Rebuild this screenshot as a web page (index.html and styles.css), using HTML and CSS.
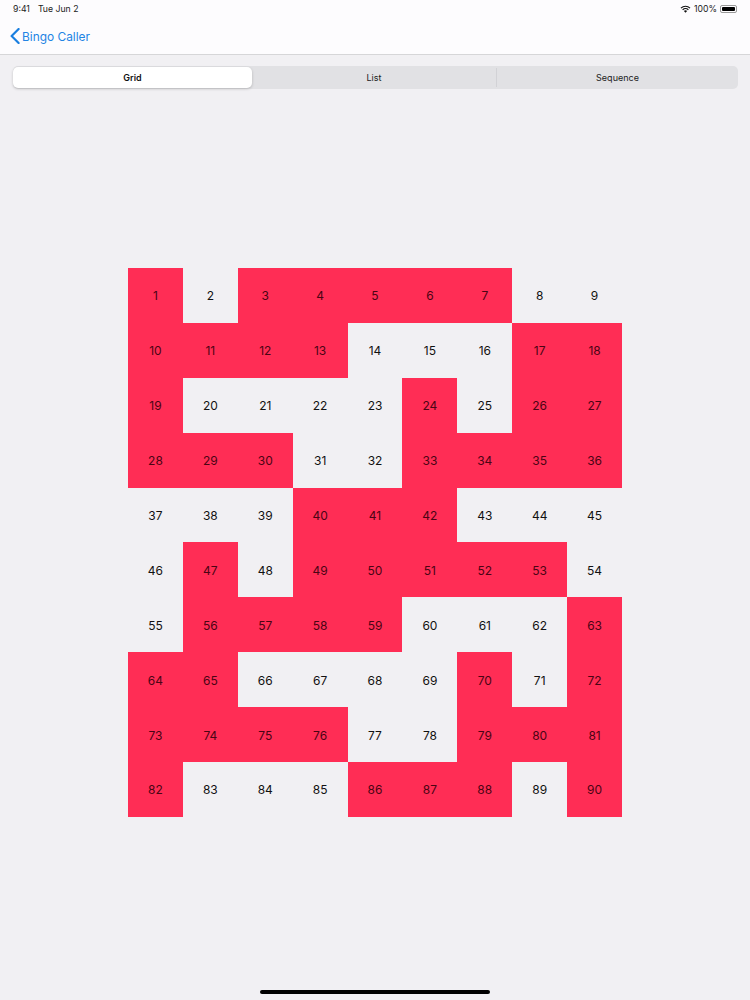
FILE: index.html
```html
<!DOCTYPE html>
<html lang="en">
<head>
  <meta charset="UTF-8">
  <meta name="viewport" content="width=device-width, initial-scale=1.0">
  <title>Bingo Caller</title>
  <link rel="stylesheet" href="styles.css">
</head>
<body>
  <header class="top-bar">
    <div class="status-bar">
      <div class="status-left">
        <span>9:41</span>
        <span>Tue Jun 2</span>
      </div>
      <div class="status-right">
        <svg class="wifi-icon" viewBox="0 0 16 12" width="11" height="8">
          <path d="M8 11.6 5.6 9.1a3.4 3.4 0 0 1 4.8 0z" fill="#111"/>
          <path d="M3.7 7.2a6.1 6.1 0 0 1 8.6 0" fill="none" stroke="#111" stroke-width="1.7"/>
          <path d="M1.2 4.6a9.7 9.7 0 0 1 13.6 0" fill="none" stroke="#111" stroke-width="1.7"/>
        </svg>
        <span>100%</span>
        <span class="battery"><span class="battery-fill"></span></span>
      </div>
    </div>
    <nav class="nav-bar">
      <a class="back-link" href="#">
        <svg viewBox="0 0 10 16" width="10" height="16">
          <path d="M8.6 1 1.6 8l7 7" fill="none" stroke="#1a7fe0" stroke-width="2.2" stroke-linecap="round" stroke-linejoin="round"/>
        </svg>
        <span>Bingo Caller</span>
      </a>
    </nav>
  </header>

  <main class="content">
    <div class="segments">
      <div class="segment active">Grid</div>
      <div class="segment list-segment">List</div>
      <div class="segment">Sequence</div>
    </div>

    <div class="board">
      <div class="cell on">1</div><div class="cell">2</div><div class="cell on">3</div><div class="cell on">4</div><div class="cell on">5</div><div class="cell on">6</div><div class="cell on">7</div><div class="cell">8</div><div class="cell">9</div>
      <div class="cell on">10</div><div class="cell on">11</div><div class="cell on">12</div><div class="cell on">13</div><div class="cell">14</div><div class="cell">15</div><div class="cell">16</div><div class="cell on">17</div><div class="cell on">18</div>
      <div class="cell on">19</div><div class="cell">20</div><div class="cell">21</div><div class="cell">22</div><div class="cell">23</div><div class="cell on">24</div><div class="cell">25</div><div class="cell on">26</div><div class="cell on">27</div>
      <div class="cell on">28</div><div class="cell on">29</div><div class="cell on">30</div><div class="cell">31</div><div class="cell">32</div><div class="cell on">33</div><div class="cell on">34</div><div class="cell on">35</div><div class="cell on">36</div>
      <div class="cell">37</div><div class="cell">38</div><div class="cell">39</div><div class="cell on">40</div><div class="cell on">41</div><div class="cell on">42</div><div class="cell">43</div><div class="cell">44</div><div class="cell">45</div>
      <div class="cell">46</div><div class="cell on">47</div><div class="cell">48</div><div class="cell on">49</div><div class="cell on">50</div><div class="cell on">51</div><div class="cell on">52</div><div class="cell on">53</div><div class="cell">54</div>
      <div class="cell">55</div><div class="cell on">56</div><div class="cell on">57</div><div class="cell on">58</div><div class="cell on">59</div><div class="cell">60</div><div class="cell">61</div><div class="cell">62</div><div class="cell on">63</div>
      <div class="cell on">64</div><div class="cell on">65</div><div class="cell">66</div><div class="cell">67</div><div class="cell">68</div><div class="cell">69</div><div class="cell on">70</div><div class="cell">71</div><div class="cell on">72</div>
      <div class="cell on">73</div><div class="cell on">74</div><div class="cell on">75</div><div class="cell on">76</div><div class="cell">77</div><div class="cell">78</div><div class="cell on">79</div><div class="cell on">80</div><div class="cell on">81</div>
      <div class="cell on">82</div><div class="cell">83</div><div class="cell">84</div><div class="cell">85</div><div class="cell on">86</div><div class="cell on">87</div><div class="cell on">88</div><div class="cell">89</div><div class="cell on">90</div>
    </div>
  </main>

  <div class="home-indicator"></div>
</body>
</html>
```

FILE: styles.css
```css
* {
  margin: 0;
  padding: 0;
  box-sizing: border-box;
  font-family: Inter, 'Liberation Sans', sans-serif;
}

html, body {
  height: 1000px;
  overflow: hidden;
}

body {
  background: #f1f0f3;
  color: #111;
  position: relative;
}

.top-bar {
  height: 55px;
  background: #fdfcfe;
  border-bottom: 1px solid #d6d6d8;
}

.status-bar {
  height: 18px;
  padding: 0 13px;
  display: flex;
  justify-content: space-between;
  align-items: center;
  font-size: 8.7px;
  color: #222;
}

.status-left {
  display: flex;
  gap: 8px;
}

.status-right {
  display: flex;
  align-items: center;
  gap: 3px;
}

.battery {
  width: 17px;
  height: 8px;
  padding: 1px;
  border-radius: 2px;
  border: 1px solid #999;
  display: block;
}

.battery-fill {
  display: block;
  height: 100%;
  background: #000;
  border-radius: 1px;
}

.nav-bar {
  padding: 10px 0 0 10px;
}

.back-link {
  display: inline-flex;
  align-items: center;
  gap: 2px;
  font-size: 11.9px;
  color: #2384e4;
  text-decoration: none;
}

.content {
  padding: 11px 12px 0 13px;
}

.segments {
  display: flex;
  height: 23px;
  background: #e1e1e4;
  border-radius: 5px;
}

.segment {
  flex: 1;
  display: flex;
  align-items: center;
  justify-content: center;
  font-size: 9px;
  color: #222;
  border-left: 1px solid #d2d2d6;
  margin: 2px 0;
}

.segment:first-child {
  border-left: none;
}

.segment.active {
  flex: 0 0 239px;
  margin: 1px 0;
  background: #fff;
  border-radius: 5px;
  font-weight: 600;
  color: #111;
  box-shadow: 0 1px 3px rgba(0, 0, 0, 0.2);
}

.segment.active + .segment {
  border-left: none;
}

.segment.list-segment {
  flex: 0 0 244px;
}

.board {
  display: grid;
  grid-template-columns: repeat(9, 54.9px);
  grid-auto-rows: 54.9px;
  width: 494.1px;
  margin: 179px 0 0 115px;
}

.cell {
  display: flex;
  align-items: center;
  justify-content: center;
  padding-top: 1px;
  font-size: 12px;
  color: #111;
}

.cell.on {
  background: #ff2d55;
  color: #4a0414;
}

.home-indicator {
  position: absolute;
  left: 260px;
  bottom: 6px;
  width: 230px;
  height: 4px;
  background: #000;
  border-radius: 2px;
}
```
